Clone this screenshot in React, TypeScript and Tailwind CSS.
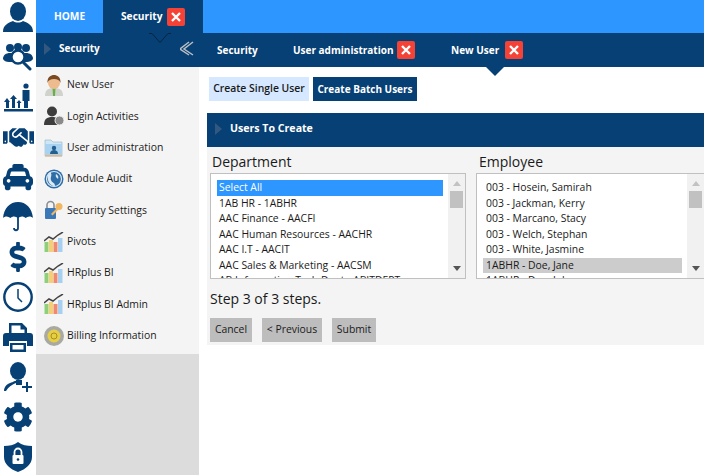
import React from "react";
import { FaHandshake, FaTaxi, FaDollarSign, FaCog } from "react-icons/fa";

const navy = "#074075";

const CloseBox = () => (
  <span className="flex h-[18px] w-[18px] shrink-0 items-center justify-center rounded-[2px] bg-[#f44336]">
    <svg width="12" height="12" viewBox="0 0 12 12">
      <path d="M2 2l8 8M10 2l-8 8" stroke="#fff" strokeWidth="2.4" />
    </svg>
  </span>
);

const Arrow = () => (
  <svg width="7" height="12" viewBox="0 0 7 12">
    <path d="M0 0l7 6-7 6z" fill="#33587f" />
  </svg>
);

const RailUser = () => (
  <svg width="30" height="30" viewBox="0 0 30 30" fill={navy}>
    <ellipse cx="15" cy="9.5" rx="8" ry="9.5" />
    <path d="M0 30c0-7 5-9 10-11 3 2 7 2 10 0 5 2 10 4 10 11z" />
  </svg>
);

const RailUsers = () => (
  <svg width="30" height="28" viewBox="0 0 30 28" fill={navy}>
    <circle cx="7" cy="5" r="4" />
    <circle cx="15" cy="4" r="4" />
    <circle cx="23" cy="5" r="4" />
    <path d="M0 16c0-4 3-6 7-6h16c4 0 7 2 7 6-1 2-4 3-6 3H6c-3 0-5-1-6-3z" />
    <circle cx="15" cy="14" r="6.500" fill="#fff" stroke={navy} strokeWidth="2.4" />
    <path d="M20 19l7 7" stroke={navy} strokeWidth="3" strokeLinecap="round" />
  </svg>
);

const RailChart = () => (
  <svg width="29" height="29" viewBox="0 0 29 29" fill={navy}>
    <circle cx="22" cy="3" r="2.6" />
    <path d="M18.500 7h7v11H24v7h-4v-7h-1.500z" />
    <path d="M2 25v-6H0l3-4 3 4H5v6zM8 25v-9H6l3.500-4 3.500 4h-2v9zM14 25v-5h-1.500l2.500-3 2.500 3H16v5z" />
    <rect x="0" y="26" width="29" height="2.500" />
  </svg>
);

const RailUmbrella = () => (
  <svg width="30" height="30" viewBox="0 0 30 30" fill={navy}>
    <path d="M15 0c8 0 14 6 15 16-2-2-5-2-7.500 0-2-2-5-2-7.500 0-2.500-2-5.500-2-7.500 0C5 14 2 14 0 16 1 6 7 0 15 0z" />
    <path d="M15 14v12c0 3-4 3-4 0" fill="none" stroke={navy} strokeWidth="1.800" />
  </svg>
);

const RailClock = () => (
  <svg width="30" height="30" viewBox="0 0 30 30" fill="none" stroke={navy}>
    <circle cx="15" cy="15" r="13.700" strokeWidth="2.400" />
    <path d="M15 7v9l4 4" strokeWidth="1.500" />
  </svg>
);

const RailPrinter = () => (
  <svg width="30" height="30" viewBox="0 0 30 30" fill={navy}>
    <path d="M6 12V1h13l5 5v6h-2.500V7.500H17.500V3.500h-9V12z" />
    <path d="M3 11h24a3 3 0 013 3v10h-6v-5H6v5H0V14a3 3 0 013-3z" />
    <path d="M7 21h16v9H7zM9.500 23v4.500h11V23z" fill-rule="evenodd" />
  </svg>
);

const RailUserPlus = () => (
  <svg width="30" height="30" viewBox="0 0 30 30" fill={navy}>
    <ellipse cx="15" cy="9" rx="8" ry="9" />
    <path d="M1 29c0-5 4-8 9-9 2-2 8-2 9 0-3 0-11 1-16 9z" />
    <path d="M13 18h6v5h-6z" />
    <path d="M23 20h2v4h4v2h-4v4h-2v-4h-4v-2h4z" />
  </svg>
);

const RailShield = () => (
  <svg width="28" height="30" viewBox="0 0 28 30">
    <path d="M14 0c4 3 9 4 14 4v11c0 7-6 12-14 15C6 27 0 22 0 15V4c5 0 10-1 14-4z" fill={navy} />
    <rect x="8.500" y="13" width="11" height="9" rx="1" fill="#fff" />
    <path d="M10.500 13v-3a3.500 3.500 0 017 0v3" fill="none" stroke="#fff" strokeWidth="1.800" />
    <circle cx="14" cy="17.500" r="1.300" fill={navy} />
  </svg>
);

const rail = [
  <RailUser />,
  <RailUsers />,
  <RailChart />,
  <FaHandshake size={31} />,
  <FaTaxi size={30} />,
  <RailUmbrella />,
  <FaDollarSign size={30} />,
  <RailClock />,
  <RailPrinter />,
  <RailUserPlus />,
  <FaCog size={30} />,
  <RailShield />,
];

const NewUserIcon = () => (
  <svg width="20" height="21" viewBox="0 0 20 21">
    <path d="M1 21c0-6 3-8 9-8s9 2 9 8z" fill="#cfd3cc" />
    <path d="M8.500 13h3l-.5 8H9z" fill="#6ab04a" />
    <circle cx="10" cy="8" r="6" fill="#eebb8e" />
    <path d="M3.500 8C3 2 7 0 10 0s7 2 6.500 8c-1-3-3-4-6.500-4S4.500 5 3.500 8z" fill="#7a4a24" />
  </svg>
);

const LoginIcon = () => (
  <svg width="20" height="20" viewBox="0 0 20 20">
    <circle cx="8" cy="5.500" r="5" fill="#3d3d3d" />
    <path d="M0 19c0-6 3-8 8-8s8 2 8 8z" fill="#3d3d3d" />
    <circle cx="15.500" cy="14.500" r="4.500" fill="#8a8a8a" stroke="#eee" />
  </svg>
);

const FolderIcon = () => (
  <svg width="19" height="19" viewBox="0 0 19 19">
    <path d="M1 2h6l2 2h9v14H1z" fill="#cfe6f5" stroke="#8fb3c9" strokeWidth=".6" />
    <path d="M1 6h17v12H1z" fill="#a8d2ef" />
    <circle cx="10" cy="10" r="2.200" fill="#24608f" />
    <path d="M6 16c0-3 2-4 4-4s4 1 4 4z" fill="#24608f" />
    <rect x="1" y="17" width="17" height="1.500" fill="#e3b887" />
  </svg>
);

const GlobeIcon = () => (
  <svg width="20" height="20" viewBox="0 0 20 20">
    <circle cx="10" cy="10" r="9.500" fill="#2d6da8" />
    <circle cx="10" cy="10" r="7.500" fill="none" stroke="#dbe9f4" strokeWidth="1.200" />
    <path d="M6 3c3 3 0 5 1 8s4 2 4 6c-3 0-6-2-7-6S4 5 6 3z" fill="#dbe9f4" />
    <path d="M12 5c2 1 3 3 2 5-1-1-3-2-2-5z" fill="#dbe9f4" />
  </svg>
);

const LockKeyIcon = () => (
  <svg width="20" height="20" viewBox="0 0 20 20">
    <path d="M3 8V5a3.500 3.500 0 017 0v3" fill="none" stroke="#8a8f94" strokeWidth="1.600" />
    <rect x="1" y="8" width="11" height="11" rx="1" fill="#3b78b8" />
    <circle cx="15" cy="6.500" r="3.500" fill="#f0b760" />
    <path d="M13 8l-6 6 1.500 1.500L14 10z" fill="#f0b760" />
  </svg>
);

const BarsIcon = () => (
  <svg width="20" height="20" viewBox="0 0 20 20">
    <rect x="0.500" y="10" width="4" height="10" fill="#8fcf7a" />
    <rect x="5" y="8" width="4" height="12" fill="#f5cf73" />
    <rect x="9.500" y="10" width="4" height="10" fill="#ef8a72" />
    <rect x="14" y="6" width="4.500" height="14" fill="#a6cff0" />
    <path d="M0 9l5-4 4 2 5-4 5-3" fill="none" stroke="#444" strokeWidth="1.500" />
  </svg>
);

const CoinIcon = () => (
  <svg width="20" height="20" viewBox="0 0 20 20">
    <circle cx="10" cy="10" r="10" fill="#a9a9a4" />
    <circle cx="10" cy="10" r="6.500" fill="#e6cf45" />
    <circle cx="10" cy="10" r="3" fill="none" stroke="#a98f1e" />
  </svg>
);

const menu = [
  { label: "New User", icon: <NewUserIcon /> },
  { label: "Login Activities", icon: <LoginIcon /> },
  { label: "User administration", icon: <FolderIcon /> },
  { label: "Module Audit", icon: <GlobeIcon /> },
  { label: "Security Settings", icon: <LockKeyIcon /> },
  { label: "Pivots", icon: <BarsIcon /> },
  { label: "HRplus BI", icon: <BarsIcon /> },
  { label: "HRplus BI Admin", icon: <BarsIcon /> },
  { label: "Billing Information", icon: <CoinIcon /> },
];

const departments = [
  "1AB HR - 1ABHR",
  "AAC Finance - AACFI",
  "AAC Human Resources - AACHR",
  "AAC I.T - AACIT",
  "AAC Sales & Marketing - AACSM",
  "AB Information Tech Dept - ABITDEPT",
];

const employees = [
  "003 - Hosein, Samirah",
  "003 - Jackman, Kerry",
  "003 - Marcano, Stacy",
  "003 - Welch, Stephan",
  "003 - White, Jasmine",
];

const Scrollbar = () => (
  <div className="flex w-[17px] shrink-0 flex-col items-center bg-[#f1f1f1] pt-[7px]">
    <svg width="8" height="5" viewBox="0 0 8 5">
      <path d="M4 0l4 5H0z" fill="#c2c2c2" />
    </svg>
    <div className="mt-[5px] h-[17px] w-[13px] bg-[#c1c1c1]" />
    <svg className="mt-[58px]" width="8" height="5" viewBox="0 0 8 5">
      <path d="M4 5L0 0h8z" fill="#555" />
    </svg>
  </div>
);

export default function App() {
  return (
    <div className="flex h-[475px] w-[704px] overflow-hidden bg-white font-['Open_Sans','Noto_Sans',sans-serif] text-[10.4px] text-[#1a1a1a]">
      <div className="-mt-[3px] flex w-[36px] shrink-0 flex-col items-center text-[#074075]">
        {rail.map((icon, i) => (
          <div key={i} className="flex h-[40px] shrink-0 items-center justify-center">
            {icon}
          </div>
        ))}
      </div>

      <div className="flex min-w-0 flex-1 flex-col">
        <div className="flex h-[33px] shrink-0 bg-[#2e96ff] text-[10.2px] font-bold text-white">
          <div className="flex w-[67px] items-center justify-center">HOME</div>
          <div className="flex w-[100px] items-center bg-[#074075] pl-[18px]">
            <span className="w-[46px]">Security</span>
            <CloseBox />
          </div>
        </div>

        <div className="relative flex h-[34px] shrink-0 items-center bg-[#074075] text-[10px] font-bold text-white">
          <svg className="absolute left-[113px] top-0" width="22" height="11" viewBox="0 0 22 11">
            <path d="M0 0.500h3l8 9 8-9h3" fill="none" stroke="#04243f" strokeWidth="1" />
          </svg>
          <div className="flex w-[163px] shrink-0 items-center pb-[3px] pl-[8px]">
            <Arrow />
            <span className="ml-[8px] flex-1">Security</span>
            <svg className="mr-[4px]" width="15" height="15" viewBox="0 0 15 15">
              <path d="M13 1L4 8l9 6M9 1L0 8l9 6" fill="none" stroke="#b9bec4" strokeWidth="1.500" />
            </svg>
          </div>
          <span className="ml-[18px] w-[76px]">Security</span>
          <span className="w-[104px] whitespace-nowrap">User administration</span>
          <CloseBox />
          <span className="ml-[36px] w-[54px] whitespace-nowrap">New User</span>
          <CloseBox />
          <svg className="absolute left-[450px] top-full" width="18" height="9" viewBox="0 0 18 9">
            <path d="M0 0h18l-9 9z" fill="#074075" />
          </svg>
        </div>

        <div className="flex min-h-0 flex-1">
          <div className="flex w-[163px] shrink-0 flex-col bg-[#dcdcdc]">
            <div className="flex h-[287px] flex-col bg-[#f4f4f4] pt-[2.5px]">
              {menu.map((item) => (
                <div key={item.label} className="flex h-[31.33px] items-center pl-[8px]">
                  <span className="flex w-[23px] shrink-0">{item.icon}</span>
                  {item.label}
                </div>
              ))}
            </div>
          </div>

          <div className="flex min-w-0 flex-1 flex-col pl-[8px]">
            <div className="mt-[10px] flex gap-[4px] pl-[2px]">
              <div className="flex h-[24px] w-[100px] items-center justify-center whitespace-nowrap bg-[#d6e8ff] font-semibold">Create Single User</div>
              <div className="flex h-[24px] w-[104px] items-center justify-center whitespace-nowrap bg-[#074075] text-[10px] font-bold text-white">Create Batch Users</div>
            </div>

            <div className="mt-[12px] flex h-[34px] items-center bg-[#074075] pb-[3px] pl-[8px] text-[10.6px] font-bold text-white">
              <Arrow />
              <span className="ml-[8px]">Users To Create</span>
            </div>

            <div className="h-[198px] bg-[#f4f4f4] pl-[3px] pt-[6px]">
              <div className="flex gap-[10px]">
                <div className="w-[256px] shrink-0">
                  <div className="h-[20px] pl-[2px] text-[14px] leading-[17px]">Department</div>
                  <div className="flex h-[106px] border border-[#c0c0c0] bg-white">
                    <div className="min-w-0 flex-1 overflow-hidden pl-[6px] pr-[5px] pt-[6px]">
                      <div className="h-[15.5px] bg-[#2e96ff] pl-[2px] leading-[14.5px] text-white">Select All</div>
                      {departments.map((d) => (
                        <div key={d} className="h-[15.5px] whitespace-nowrap pl-[2px] leading-[14.5px]">{d}</div>
                      ))}
                    </div>
                    <Scrollbar />
                  </div>
                </div>
                <div className="w-[228px] shrink-0">
                  <div className="h-[20px] pl-[3px] text-[14px] leading-[17px]">Employee</div>
                  <div className="flex h-[106px] border border-r-0 border-[#c0c0c0] bg-white">
                    <div className="min-w-0 flex-1 overflow-hidden pl-[6px] pr-[5px] pt-[6px]">
                      {employees.map((e) => (
                        <div key={e} className="h-[15.5px] whitespace-nowrap pl-[3px] leading-[14.5px]">{e}</div>
                      ))}
                      <div className="h-[15.5px] whitespace-nowrap bg-[#cccccc] pl-[3px] leading-[14.5px]">1ABHR - Doe, Jane</div>
                      <div className="h-[15.5px] whitespace-nowrap pl-[3px] leading-[14.5px]">1ABHR - Doe, John</div>
                    </div>
                    <Scrollbar />
                  </div>
                </div>
              </div>

              <div className="mt-[11px] text-[14px] leading-[18px]">Step 3 of 3 steps.</div>
              <div className="mt-[10px] flex gap-[10px]">
                <div className="flex h-[24px] w-[42px] items-center justify-center bg-[#bdbdbd]">Cancel</div>
                <div className="flex h-[24px] w-[60px] items-center justify-center bg-[#bdbdbd]">&lt; Previous</div>
                <div className="flex h-[24px] w-[44px] items-center justify-center bg-[#bdbdbd]">Submit</div>
              </div>
            </div>
          </div>
        </div>
      </div>
    </div>
  );
}
